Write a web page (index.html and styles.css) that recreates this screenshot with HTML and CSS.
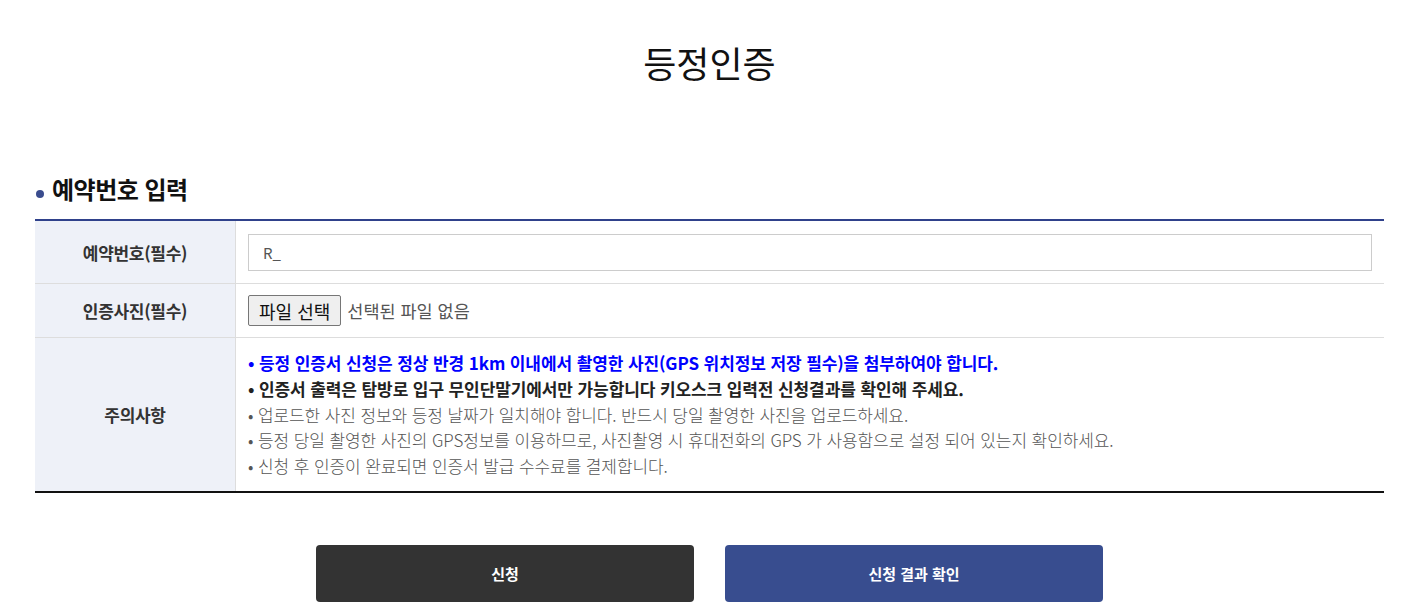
FILE: index.html
```html
<!DOCTYPE html>
<html lang="ko">
<head>
    <meta charset="UTF-8">
    <title>등정인증</title>
    <link rel="stylesheet" href="styles.css">
</head>
<body>

<div class="wrap">
    <h1 class="page-title">등정인증</h1>

    <h3 class="sec-title">예약번호 입력</h3>

    <table class="form-table">
        <tr class="row-num">
            <th>예약번호(필수)</th>
            <td><input type="text" class="txt" value="R_"></td>
        </tr>
        <tr class="row-file">
            <th>인증사진(필수)</th>
            <td>
                <span class="file-box">
                    <button type="button" class="file-btn">파일 선택</button>
                    <span class="file-name">선택된 파일 없음</span>
                </span>
            </td>
        </tr>
        <tr class="row-notice">
            <th>주의사항</th>
            <td>
                <ul class="notice">
                    <li class="blue">등정 인증서 신청은 정상 반경 1km 이내에서 촬영한 사진(GPS 위치정보 저장 필수)을 첨부하여야 합니다.</li>
                    <li class="bold">인증서 출력은 탐방로 입구 무인단말기에서만 가능합니다 키오스크 입력전 신청결과를 확인해 주세요.</li>
                    <li>업로드한 사진 정보와 등정 날짜가 일치해야 합니다. 반드시 당일 촬영한 사진을 업로드하세요.</li>
                    <li>등정 당일 촬영한 사진의 GPS정보를 이용하므로, 사진촬영 시 휴대전화의 GPS 가 사용함으로 설정 되어 있는지 확인하세요.</li>
                    <li>신청 후 인증이 완료되면 인증서 발급 수수료를 결제합니다.</li>
                </ul>
            </td>
        </tr>
    </table>

    <div class="btn-area">
        <button type="button" class="btn btn-dark">신청</button>
        <button type="button" class="btn btn-blue">신청 결과 확인</button>
    </div>
</div>

</body>
</html>
```

FILE: styles.css
```css
body {
    font-family: "Noto Sans CJK KR", "Noto Sans", sans-serif;
    background: #fff;
    color: #333;
    margin: 0;
    padding: 0;
}
.wrap {
    width: 1349px;
    margin-left: 35px;
}
.page-title {
    text-align: center;
    font-size: 36px;
    font-weight: normal;
    color: #111;
    margin: 0;
    padding-top: 37px;
    line-height: 50px;
}
.sec-title {
    position: relative;
    margin: 86px 0 0;
    padding-left: 17px;
    font-size: 24px;
    line-height: 32px;
    letter-spacing: -0.5px;
    color: #111;
    font-weight: bold;
}
.sec-title::before {
    content: "";
    position: absolute;
    left: 1px;
    top: 17px;
    width: 8px;
    height: 8px;
    border-radius: 50%;
    background: #3a4c8e;
}
.form-table {
    width: 100%;
    margin-top: 14px;
    border-collapse: collapse;
    border-top: 2px solid #2f418b;
    border-bottom: 2px solid #111;
}
.form-table th {
    width: 200px;
    background: #eef1f8;
    font-size: 17px;
    font-weight: bold;
    letter-spacing: -0.3px;
    color: #333;
    border-bottom: 1px solid #ddd;
    border-right: 1px solid #ddd;
    padding: 0;
}
.form-table td {
    border-bottom: 1px solid #ddd;
    padding: 0 12px;
}
.row-num th, .row-num td {
    height: 62px;
    border-top: 1px solid #111;
}
.row-file th, .row-file td {
    height: 53px;
}
.row-notice th, .row-notice td {
    height: 153px;
    border-bottom: none;
}
.txt {
    display: block;
    width: 100%;
    box-sizing: border-box;
    height: 37px;
    border: 1px solid #ccc;
    padding: 0 14px;
    font-family: "Noto Sans CJK KR", sans-serif;
    font-size: 15px;
    color: #555;
}
.file-box {
    display: flex;
    align-items: center;
    gap: 6px;
}
.file-btn {
    font-family: "Noto Sans CJK KR", sans-serif;
    font-size: 18px;
    color: #111;
    background: #efefef;
    border: 1px solid #767676;
    border-radius: 2px;
    height: 31px;
    padding: 0 10px;
    line-height: 1;
}
.file-name {
    font-size: 17.5px;
    color: #555;
}
.notice {
    list-style: none;
    margin: 0;
    padding: 0;
    font-size: 17px;
    line-height: 25.8px;
    color: #555;
    font-weight: 300;
    letter-spacing: -0.1px;
}
.notice li::before {
    content: "\2022\00a0";
}
.notice .blue {
    color: #0000ff;
    font-weight: bold;
}
.notice .bold {
    color: #222;
    font-weight: bold;
}
.btn-area {
    display: flex;
    justify-content: center;
    gap: 31px;
    margin-top: 52px;
}
.btn {
    width: 378px;
    height: 57px;
    border: none;
    border-radius: 4px;
    color: #fff;
    font-family: "Noto Sans CJK KR", sans-serif;
    font-size: 15px;
    font-weight: bold;
    cursor: pointer;
}
.btn-dark {
    background: #333;
}
.btn-blue {
    background: #384d8f;
}
```
